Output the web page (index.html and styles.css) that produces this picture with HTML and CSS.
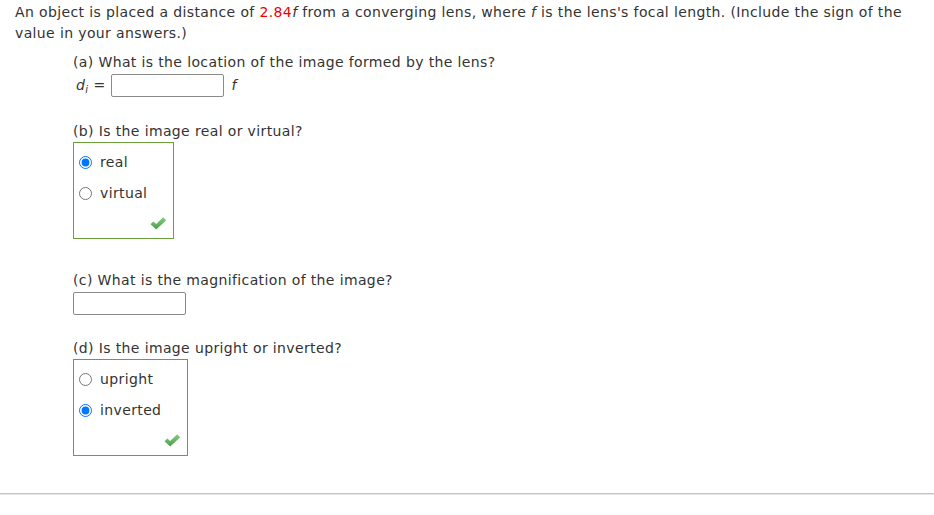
FILE: index.html
```html
<!DOCTYPE html>
<html lang="en">
<head>
<meta charset="utf-8">
<title>Converging lens</title>
<link rel="stylesheet" href="styles.css">
</head>
<body>
<div class="page">
  <p class="intro">An object is placed a distance of <span class="given">2.84</span><i>f</i> from a converging lens, where <i>f</i> is the lens's focal length. (Include the sign of the value in your answers.)</p>
  <div class="parts">
    <div class="part">
      <div class="q">(a) What is the location of the image formed by the lens?</div>
      <div class="answer-row">
        <span class="var"><i>d</i><sub><i>i</i></sub></span>
        <span class="eq">=</span>
        <input class="field" type="text">
        <span class="unit"><i>f</i></span>
      </div>
    </div>
    <div class="part">
      <div class="q">(b) Is the image real or virtual?</div>
      <div class="choice-box">
        <label class="option"><input type="radio" name="b" checked><span>real</span></label>
        <label class="option"><input type="radio" name="b"><span>virtual</span></label>
        <div class="check-row">
          <svg class="check" width="17" height="13" viewBox="0 0 17 13"><defs><linearGradient id="g1" x1="0" y1="0" x2="0" y2="1"><stop offset="0" stop-color="#7fcf7f"/><stop offset="1" stop-color="#4a9e4a"/></linearGradient></defs><path d="M0.5 7.2 L3.3 4.4 L6.2 7.1 L13.2 0.3 L16.2 3.3 L6.2 12.6 Z" fill="url(#g1)"/></svg>
        </div>
      </div>
    </div>
    <div class="part">
      <div class="q">(c) What is the magnification of the image?</div>
      <div class="answer-row">
        <input class="field" type="text">
      </div>
    </div>
    <div class="part part-d">
      <div class="q">(d) Is the image upright or inverted?</div>
      <div class="choice-box">
        <label class="option"><input type="radio" name="d"><span>upright</span></label>
        <label class="option"><input type="radio" name="d" checked><span>inverted</span></label>
        <div class="check-row">
          <svg class="check" width="17" height="13" viewBox="0 0 17 13"><defs><linearGradient id="g2" x1="0" y1="0" x2="0" y2="1"><stop offset="0" stop-color="#7fcf7f"/><stop offset="1" stop-color="#4a9e4a"/></linearGradient></defs><path d="M0.5 7.2 L3.3 4.4 L6.2 7.1 L13.2 0.3 L16.2 3.3 L6.2 12.6 Z" fill="url(#g2)"/></svg>
        </div>
      </div>
    </div>
  </div>
  <div class="divider"></div>
</div>
</body>
</html>
```

FILE: styles.css
```css
html, body {
  margin: 0;
  padding: 0;
  background: #fff;
}

body {
  font-family: "DejaVu Sans", Verdana, sans-serif;
  font-size: 14px;
  line-height: 21px;
  letter-spacing: 0.37px;
  color: #333;
}

.page {
  padding: 2px 15px 0 15px;
}

.intro {
  margin: 0;
}

.given {
  color: #e00;
}

.parts {
  margin: 8px 0 0 58px;
}

.part + .part {
  margin-top: 24px;
}

.part-d {
  margin-top: 23px !important;
}

.answer-row {
  display: flex;
  align-items: center;
  margin-top: 1px;
  height: 23px;
}

.var {
  margin-left: 3px;
  margin-right: 5px;
}

.var sub {
  font-size: 10px;
  line-height: 0;
  vertical-align: -3px;
}

.eq {
  margin-right: 5px;
}

.field {
  box-sizing: border-box;
  width: 113px;
  height: 23px;
  margin: 0;
  padding: 1px 3px;
  border: 1px solid #8a8a8a;
  border-radius: 2px;
  background: #fff;
  font: inherit;
}

.unit {
  margin-left: 8px;
}

.choice-box {
  display: inline-flex;
  flex-direction: column;
  border: 1px solid #6a9f3c;
  padding: 4px 6px 0 4px;
  margin-bottom: 7px;
}

.option {
  display: flex;
  align-items: center;
  height: 31px;
  padding-right: 20px;
}

.option input {
  width: 13px;
  height: 13px;
  margin: 0 8px 0 1px;
}

.check-row {
  display: flex;
  justify-content: flex-end;
  align-items: center;
  height: 29px;
}

.check {
  display: block;
}

.divider {
  margin: 30px -15px 0 -15px;
  border-top: 1px solid #c6c6c6;
  border-bottom: 1px solid #e6e6e6;
}
```
